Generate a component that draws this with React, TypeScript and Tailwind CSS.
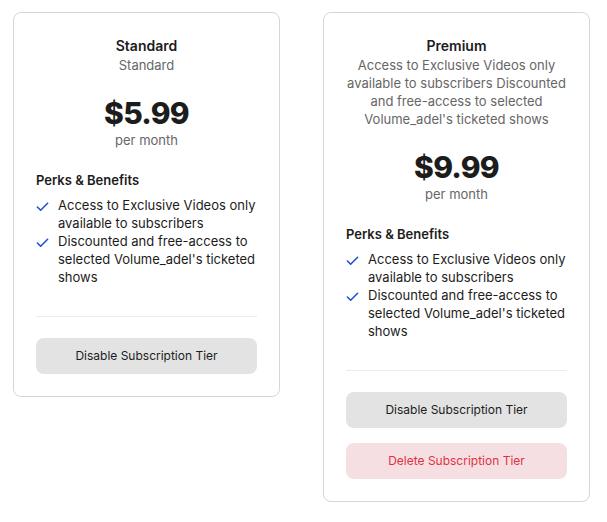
const perks = [
  "Access to Exclusive Videos only available to subscribers",
  "Discounted and free-access to selected Volume_adel's ticketed shows",
];

function Check() {
  return (
    <svg viewBox="0 0 14 14" className="mt-[4px] h-[13px] w-[13px] shrink-0" fill="none">
      <path d="M1.5 7.5 L5 11 L12.5 3.5" stroke="#1d4ed8" strokeWidth="1.7" strokeLinecap="round" strokeLinejoin="round" />
    </svg>
  );
}

function Tier({ name, desc, price, deletable }: { name: string; desc: string; price: string; deletable?: boolean }) {
  return (
    <div className="flex w-[267px] flex-col rounded-lg border border-[#d6d6d6] bg-white px-[22px] pt-[23px] pb-[22px]">
      <div className="text-center text-[14px] font-semibold leading-5 text-[#1c1c1c]">{name}</div>
      <div className="text-center text-[13px] leading-[18px] text-[#666]">{desc}</div>
      <div className="mt-[21px] text-center text-[30px] font-extrabold leading-9 tracking-tight text-[#1c1c1c]">{price}</div>
      <div className="text-center text-[13px] leading-[18px] text-[#666]">per month</div>
      <div className="mt-[22px] text-[13px] font-semibold leading-[18px] text-[#1c1c1c]">Perks &amp; Benefits</div>
      <ul className="mt-[7px] flex flex-col">
        {perks.map((p) => (
          <li key={p} className="flex gap-[9px] text-[13px] leading-[18px] text-[#1c1c1c]">
            <Check />
            <span>{p}</span>
          </li>
        ))}
      </ul>
      <div className="mt-[30px] h-px bg-[#ececec]" />
      <button className="mt-[21px] h-9 rounded-lg bg-[#e3e3e3] text-[12px] text-[#1c1c1c]">Disable Subscription Tier</button>
      {deletable && (
        <button className="mt-[15px] h-9 rounded-lg bg-[#f6dfe3] text-[12px] text-[#e0323f]">Delete Subscription Tier</button>
      )}
    </div>
  );
}

export default function App() {
  return (
    <div className="flex items-start gap-[43px] bg-white pl-[13px] pt-3 font-['Inter',sans-serif] min-h-[522px]">
      <Tier name="Standard" desc="Standard" price="$5.99" />
      <Tier
        name="Premium"
        desc="Access to Exclusive Videos only available to subscribers Discounted and free-access to selected Volume_adel's ticketed shows"
        price="$9.99"
        deletable
      />
    </div>
  );
}
